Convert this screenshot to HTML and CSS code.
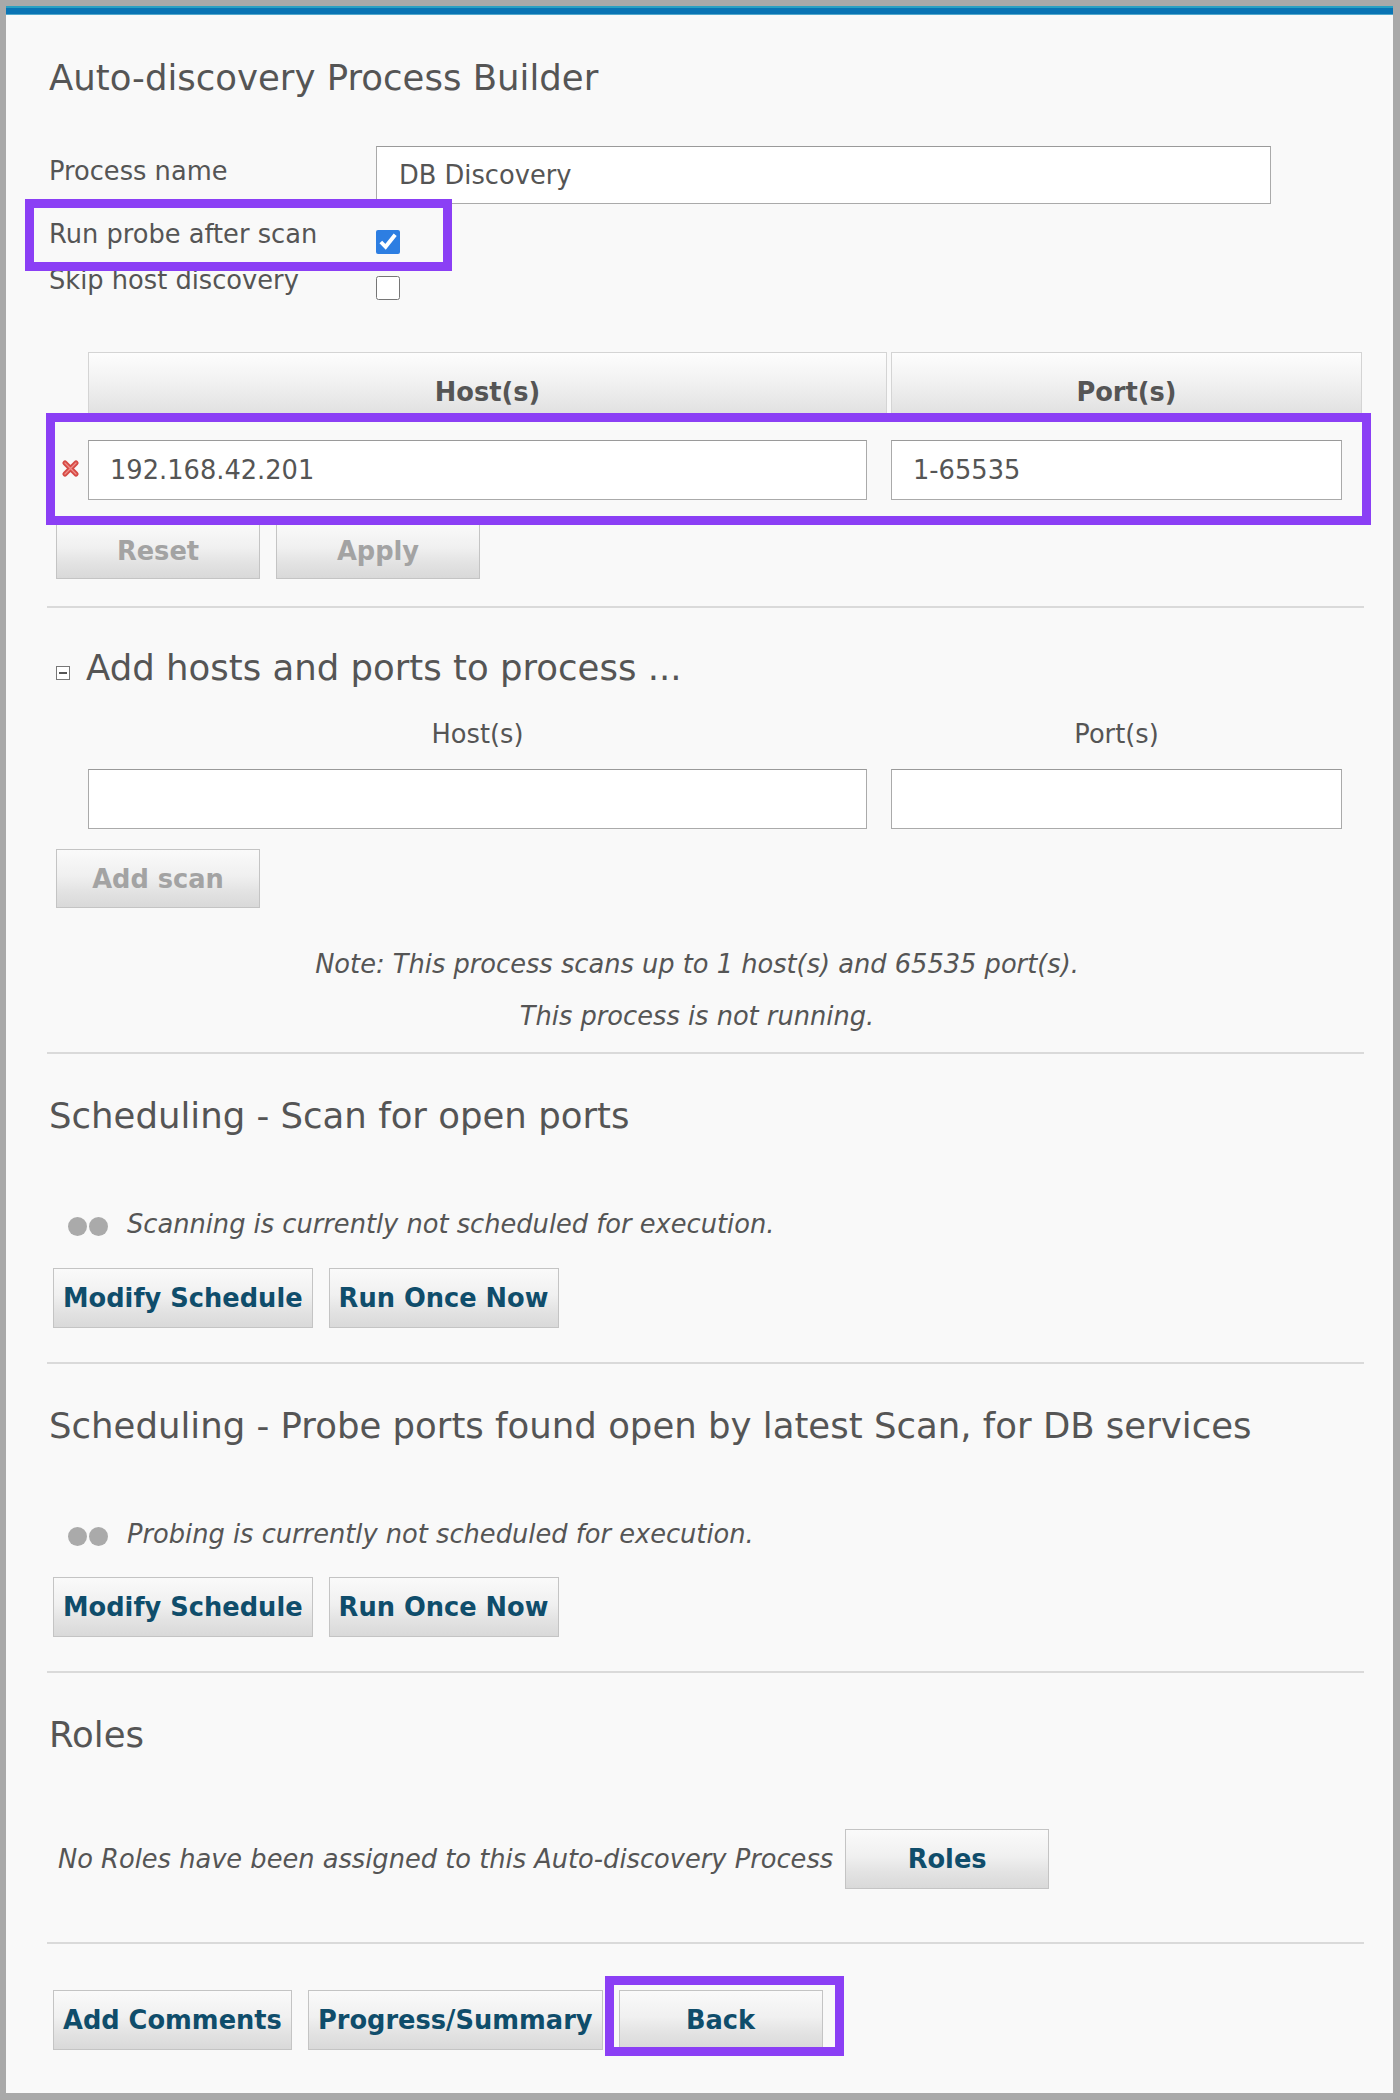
FILE: index.html
```html
<!DOCTYPE html>
<html>
<head>
<meta charset="utf-8">
<title>Auto-discovery Process Builder</title>
<link rel="stylesheet" href="styles.css">
</head>
<body>
<div class="panel">
  <div class="bar"></div>
  <div class="content">
    <h1 class="title t1">Auto-discovery Process Builder</h1>

    <div class="frow r1"><label class="flabel">Process name</label><input class="text name" type="text" value="DB Discovery"></div>
    <div class="frow r2"><label class="flabel">Run probe after scan</label><input type="checkbox" class="cb" checked></div>
    <div class="frow r3"><label class="flabel">Skip host discovery</label><input type="checkbox" class="cb"></div>

    <div class="tbl">
      <div class="trow thead">
        <div class="xcol"></div>
        <div class="th host">Host(s)</div>
        <div class="th port">Port(s)</div>
      </div>
      <div class="trow tdata">
        <div class="xcol"><svg class="xicon" width="19" height="19" viewBox="0 0 19 19"><path d="M4 4 L15 15 M15 4 L4 15" stroke="#d64a45" stroke-width="5.2" stroke-linecap="round"/><path d="M4 4 L15 15 M15 4 L4 15" stroke="#ee8e89" stroke-width="1.4" stroke-linecap="round"/></svg></div>
        <div class="td host"><input class="text" type="text" value="192.168.42.201"></div>
        <div class="td port"><input class="text" type="text" value="1-65535"></div>
      </div>
    </div>

    <div class="btnrow rb1"><button class="btn dis short">Reset</button><button class="btn dis short">Apply</button></div>

    <div class="div d1"></div>

    <h2 class="title h2"><svg class="minus" width="14" height="14" viewBox="0 0 14 14"><rect x="0.5" y="0.5" width="13" height="13" fill="#fff" stroke="#777"/><rect x="3" y="6" width="8" height="2" fill="#555"/></svg>Add hosts and ports to process ...</h2>

    <div class="lrow"><span class="l1">Host(s)</span><span class="l2">Port(s)</span></div>
    <div class="irow"><input class="text i1" type="text" value=""><input class="text i2" type="text" value=""></div>

    <div class="btnrow rb2"><button class="btn dis addscan">Add scan</button></div>

    <p class="note n1">Note: This process scans up to 1 host(s) and 65535 port(s).</p>
    <p class="note n2">This process is not running.</p>

    <div class="div d2"></div>

    <h2 class="title h3">Scheduling - Scan for open ports</h2>
    <div class="status s1"><span class="dots"><span class="dot"></span><span class="dot"></span></span><span>Scanning is currently not scheduled for execution.</span></div>
    <div class="btnrow rb3"><button class="btn">Modify Schedule</button><button class="btn">Run Once Now</button></div>

    <div class="div d3"></div>

    <h2 class="title h4">Scheduling - Probe ports found open by latest Scan, for DB services</h2>
    <div class="status s2"><span class="dots"><span class="dot"></span><span class="dot"></span></span><span>Probing is currently not scheduled for execution.</span></div>
    <div class="btnrow rb4"><button class="btn">Modify Schedule</button><button class="btn">Run Once Now</button></div>

    <div class="div d4"></div>

    <h2 class="title h5">Roles</h2>
    <div class="rolesrow"><span class="rtext">No Roles have been assigned to this Auto-discovery Process</span><button class="btn roles">Roles</button></div>

    <div class="div d5"></div>

    <div class="btnrow rb5"><button class="btn">Add Comments</button><button class="btn">Progress/Summary</button><button class="btn back">Back</button></div>
  </div>

  <div class="hl hl1"></div>
  <div class="hl hl2"></div>
  <div class="hl hl3"></div>
</div>
</body>
</html>
```

FILE: styles.css
```css
* { box-sizing: border-box; }
html, body { margin: 0; padding: 0; }
body {
  background: #a9a9a9;
  width: 1400px;
  height: 2100px;
  overflow: hidden;
  font-family: "DejaVu Sans", "Liberation Sans", sans-serif;
  color: #555;
}
.panel {
  position: relative;
  margin: 6px 7px 0 6px;
  height: 2087px;
  background: #f9f9f9;
}
.bar {
  height: 9px;
  background: linear-gradient(#2aa0c2 0, #2aa0c2 2px, #0a74b4 2px, #0a74b4 8px, #52a8cc 8px);
}
.content { padding: 0 29px 0 41px; }

.title {
  margin: 0;
  font-weight: normal;
  font-size: 35.5px;
  line-height: 44px;
  padding-left: 2px;
  color: #555;
}
.t1 { margin-top: 41px; }

/* form rows */
.frow { display: flex; align-items: flex-start; }
.flabel { width: 329px; flex: none; padding-left: 2px; font-size: 25.7px; line-height: 33px; }
.r1 { margin-top: 46px; height: 58px; align-items: flex-start; }
.r1 .flabel { line-height: 50px; }
.r2 { margin-top: 14px; height: 46px; }
.r3 { height: 46px; }
.cb { width: 24px; height: 24px; margin: 12px 0 0 0; accent-color: #2d7ee2; }

.text {
  font-family: "DejaVu Sans", "Liberation Sans", sans-serif;
  font-size: 25.7px;
  color: #555;
  background: #fff;
  border: 1px solid #aaa;
  border-top-color: #9a9a9a;
  height: 60px;
  padding: 0 0 0 21px;
  outline: none;
  margin: 0;
}
.name { width: 895px; height: 58px; padding-left: 22px; }

/* table */
.tbl { margin-top: 42px; }
.trow { display: flex; }
.xcol { width: 41px; flex: none; }
.thead { height: 63px; }
.th {
  height: 63px;
  border: 1px solid #d4d4d4;
  background: linear-gradient(#fdfdfd, #f2f2f2 45%, #e1e1e1);
  font-weight: bold;
  font-size: 25.7px;
  line-height: 29px;
  padding-top: 25px;
  text-align: center;
  color: #555;
}
.host { width: 799px; margin-right: 4px; flex: none; }
.port { width: 471px; flex: none; }
.tdata { margin-top: 25px; height: 60px; }
.td { padding-right: 20px; }
.td .text { width: 100%; }
.xicon { display: block; margin: 19px 0 0 14px; }

/* buttons */
.btnrow { display: flex; gap: 16px; padding-left: 6px; }
.btn {
  height: 60px;
  min-width: 204px;
  padding: 0 9px;
  border: 1px solid #c4c4c4;
  border-radius: 0;
  background: linear-gradient(#fafafa, #f0f0f0 45%, #e3e3e3 72%, #d9d9d9);
  font-family: "DejaVu Sans", "Liberation Sans", sans-serif;
  font-weight: bold;
  font-size: 25.7px;
  color: #0f4d6b;
  margin: 0;
}
.btn.dis { color: #a3a3a3; }
.btn.short { height: 57px; }
.rb1 { margin-top: 22px; padding-left: 9px; }

.div { height: 2px; background: #dadada; }
.d1 { margin-top: 27px; }

/* add hosts */
.h2 { margin-top: 38px; padding-left: 9px; }
.minus { vertical-align: 0; margin-right: 16px; }
.lrow { display: flex; margin-top: 30px; font-size: 25.7px; line-height: 29px; }
.l1 { margin-left: 41px; width: 779px; text-align: center; }
.l2 { margin-left: 24px; width: 451px; text-align: center; }
.irow { display: flex; margin-top: 20px; }
.i1 { margin-left: 41px; width: 779px; }
.i2 { margin-left: 24px; width: 451px; }
.rb2 { margin-top: 20px; padding-left: 9px; }
.addscan { height: 59px; }

.note {
  margin: 0;
  font-style: italic;
  font-size: 25.7px;
  line-height: 29px;
  text-align: center;
  padding-right: 17px;
}
.n1 { margin-top: 42px; }
.n2 { margin-top: 23px; }
.d2 { margin-top: 21px; }

/* scheduling */
.h3 { margin-top: 40px; }
.status {
  display: flex;
  align-items: center;
  margin-top: 72px;
  padding-left: 21px;
  font-style: italic;
  font-size: 25.7px;
  line-height: 29px;
}
.dots { display: flex; gap: 2px; margin-right: 19px; margin-top: 3px; }
.dot { width: 19px; height: 19px; border-radius: 50%; background: #aaa; }
.rb3 { margin-top: 29px; }
.d3 { margin-top: 34px; }
.h4 { margin-top: 40px; }
.s2 { margin-top: 72px; }
.rb4 { margin-top: 28px; }
.d4 { margin-top: 34px; }

/* roles */
.h5 { margin-top: 40px; }
.rolesrow {
  display: flex;
  align-items: center;
  margin-top: 72px;
  height: 60px;
  padding-left: 11px;
}
.rtext { font-style: italic; font-size: 25.7px; line-height: 29px; }
.roles { margin-left: 12px; }
.d5 { margin-top: 53px; }
.rb5 { margin-top: 46px; }
.back { min-width: 204px; }

/* annotation highlights */
.hl { position: absolute; border: 9px solid #8b3ff5; pointer-events: none; }
.hl1 { left: 19px; top: 193px; width: 427px; height: 72px; }
.hl2 { left: 40px; top: 407px; width: 1325px; height: 112px; }
.hl3 { left: 599px; top: 1970px; width: 239px; height: 80px; }
```
